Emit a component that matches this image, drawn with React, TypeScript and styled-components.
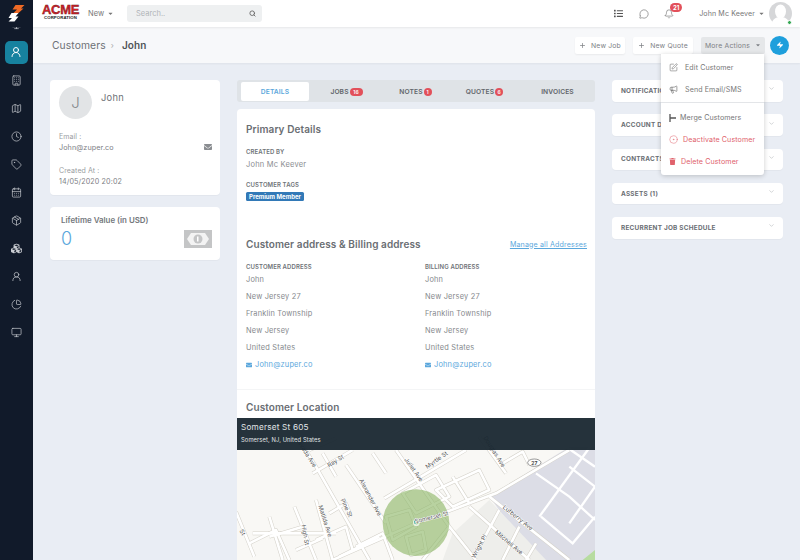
import React from "react";
import styled, { createGlobalStyle } from "styled-components";
import {
  Bell, Building, CalendarDays, ChevronDown, Clock, Map as MapIcon, Megaphone, MessageCircle,
  Monitor, Package, PieChart, Plus, Search, SquarePen, Tag, UserRound, Zap, CircleDot,
} from "lucide-react";
import { FaCaretDown, FaCubes, FaEnvelope, FaList, FaTrash } from "react-icons/fa";

const C = {
  side: "#111a2a", active: "#17829f", page: "#e9edf4", sub: "#f7f8fa", text: "#7b7f84", dark: "#63676c",
  blue: "#5ba7dc", red: "#e2505a", line: "#e3e5e8",
};
const FONT = `Inter, "Liberation Sans", sans-serif`;

const Global = createGlobalStyle`
  html, body { margin: 0; height: 100%; overflow: hidden; background: ${C.page}; }
  body { font-family: ${FONT}; color: ${C.text}; }
  * { box-sizing: border-box; }
`;

const Shell = styled.div`
  width: 800px; height: 560px; overflow: hidden;
  display: grid; grid-template-columns: 33px 1fr;
`;

/* sidebar */
const Side = styled.aside`background: ${C.side}; overflow: hidden;`;
const LogoCell = styled.div`
  position: relative; z-index: 1; height: 27px; background: ${C.side};
  display: flex; align-items: center; justify-content: center;
`;
const Nav = styled.nav`display: flex; flex-direction: column; align-items: center; margin-top: -17px; padding-right: 1px;`;
const NavItem = styled.div<{ $active?: boolean }>`
  width: 23px; height: 23px; margin: 2.5px 0; border-radius: 5px;
  display: flex; align-items: center; justify-content: center;
  background: ${(p) => (p.$active ? C.active : "transparent")};
  color: ${(p) => (p.$active ? "#fff" : "#c9ccd2")};
`;

/* top bar */
const Main = styled.div`display: flex; flex-direction: column; min-width: 0;`;
const Top = styled.header`
  height: 27px; background: #fff; display: flex; align-items: center; padding-left: 9px;
  box-shadow: 0 1px 2px rgba(0,0,0,.07); position: relative; z-index: 2;
`;
const Acme = styled.div`width: 37px; margin-top: -3px; display: flex; flex-direction: column; align-items: center;`;
const AcmeName = styled.span`
  font: 700 13px/12px "Liberation Sans", sans-serif; color: #d8232a; letter-spacing: -.3px;
  -webkit-text-stroke: .4px #6a1216;
`;
const AcmeSub = styled.span`font: 700 4.300px/4px "Liberation Sans", sans-serif; color: #222; letter-spacing: .1px;`;
const NewMenu = styled.div`
  margin-left: 9px; width: 32px; display: flex; align-items: center; gap: 3px; font-size: 7.5px; color: #777;
`;
const SearchBox = styled.div`
  margin-left: 7px; width: 135px; height: 17px; background: #eef0f1; border-radius: 3px;
  display: flex; align-items: center; justify-content: space-between; padding: 0 6px 0 9px;
  font-size: 7.5px; color: #b0b4b8;
`;
const TopRight = styled.div`
  margin-left: auto; display: flex; align-items: center; height: 100%; padding-right: 8px; color: #555;
`;
const TopIcon = styled.div<{ $w: number }>`
  position: relative; width: ${(p) => p.$w}px; display: flex; justify-content: center; align-items: center;
`;
const BellBadge = styled.span`
  position: absolute; left: 11px; top: -6px; height: 9px; min-width: 12px; border-radius: 5px; background: ${C.red};
  color: #fff; font-size: 6px; font-weight: 700; line-height: 9px; text-align: center;
`;
const UserName = styled.div`
  margin-left: 20px; display: flex; align-items: center; gap: 3px; font-size: 7.1px; color: #777; letter-spacing: .1px;
`;
const Avatar = styled.div`position: relative; width: 23px; height: 23px; margin-left: 4px;`;
const OnlineDot = styled.span`
  position: absolute; right: 0; bottom: 0; width: 5px; height: 5px; border-radius: 50%;
  background: #35a853; border: 1px solid #fff;
`;

/* breadcrumb row */
const Sub = styled.div`
  height: 36px; background: ${C.sub}; display: flex; align-items: center; padding: 0 11px 0 19px;
  position: relative; box-shadow: 0 1px 2px rgba(0,0,0,.05);
`;
const Crumb = styled.div`display: flex; align-items: center; font-size: 10.3px; color: #6d7176; letter-spacing: .1px;`;
const CrumbSep = styled.span`margin: 0 8px 0 5px; color: #aaa; font-size: 8px;`;
const CrumbNow = styled.b`color: #4f5357; font-weight: 600; font-size: 10px;`;
const Actions = styled.div`margin-left: auto; display: flex; align-items: center;`;
const ActionBtn = styled.button<{ $grey?: boolean; $w: number }>`
  all: unset; box-sizing: border-box; height: 17px; width: ${(p) => p.$w}px; margin-left: 8px; border-radius: 2px;
  display: flex; align-items: center; justify-content: center; gap: 5px; font-size: 6.8px; color: #7d8085; letter-spacing: .2px;
  background: ${(p) => (p.$grey ? "#e5e7e9" : "#fff")};
  box-shadow: ${(p) => (p.$grey ? "none" : "0 1px 2px rgba(0,0,0,.06)")};
`;
const Round = styled.div`
  width: 19px; height: 19px; margin-left: 5px; border-radius: 50%; background: #1e9fdc; color: #fff;
  display: flex; align-items: center; justify-content: center;
`;

/* dropdown lies over the page */
const Drop = styled.div`
  position: absolute; left: 628px; top: 27px; width: 103px; height: 121px; z-index: 5; background: #fff;
  border-radius: 0 0 3px 3px; box-shadow: 0 1px 5px rgba(0,0,0,.2); padding-top: 3px; color: #555;
`;
const DropItem = styled.div<{ $red?: boolean; $inset: number; $gap: number }>`
  height: 21.6px; display: flex; align-items: center; padding-left: ${(p) => p.$inset}px; gap: ${(p) => p.$gap}px;
  font-size: 7.1px; letter-spacing: .1px; color: ${(p) => (p.$red ? "#e0626c" : "#777")};
  svg { color: ${(p) => (p.$red ? "#e0626c" : "#555")}; }
`;
const DropLine = styled.div`height: 1px; background: ${C.line}; margin: 2px 0 4px;`;

/* page columns */
const Content = styled.main`
  flex: 1; min-height: 0; overflow: hidden; padding: 17px 17px 0;
  display: grid; grid-template-columns: 170px 358px 171px; column-gap: 17px; align-items: start;
`;
const Col = styled.div`display: flex; flex-direction: column;`;
const Card = styled.section`
  background: #fff; border-radius: 4px; box-shadow: 0 1px 1px rgba(0,0,0,.03);
`;
const ProfileCard = styled(Card)`height: 115px; padding: 6px 8px 0 9px;`;
const ProfileHead = styled.div`display: flex; gap: 9px;`;
const Initial = styled.div`
  width: 33px; height: 33px; border-radius: 50%; background: #e2e4e6; color: #85898e;
  display: flex; align-items: center; justify-content: center; font-size: 15px; font-weight: 300;
`;
const ProfileName = styled.div`font-size: 9.3px; line-height: 24px; color: #6f7378; letter-spacing: .3px;`;
const Small = styled.div`font-size: 7px; line-height: 11px; color: #9a9da1; letter-spacing: .1px;`;
const Value = styled.div`font-size: 7.2px; line-height: 11px; color: #7d8085; letter-spacing: .1px;`;
const EmailRow = styled.div`margin-top: 12px; display: flex; align-items: flex-end; justify-content: space-between;
  svg { margin-bottom: 2px; }`;
const CreatedBlock = styled.div`margin-top: 12px;`;
const LifeCard = styled(Card)`height: 53px; margin-top: 12px; padding: 8px 8px 0 11px;`;
const LifeTitle = styled.div`font-size: 7.9px; font-weight: 600; line-height: 11px; color: #73777c;`;
const LifeRow = styled.div`display: flex; justify-content: space-between; align-items: flex-start; margin-top: 2px;
  svg { margin-top: 2px; }`;
const LifeValue = styled.div`font-size: 18px; line-height: 22px; font-weight: 300; color: ${C.blue};`;

/* tabs */
const Tabs = styled.div`
  height: 22px; background: #dfe3e7; border-radius: 3px; padding: 2px 2px 2px 4px; display: grid;
  grid-template-columns: 68px 75px 63px 75px 1fr; align-items: center;
`;
const Tab = styled.div<{ $on?: boolean }>`
  height: 19px; display: flex; align-items: center; justify-content: center; gap: 1px; border-radius: 2px;
  font-size: 6.7px; font-weight: 600; letter-spacing: .1px;
  color: ${(p) => (p.$on ? C.blue : "#62666b")}; background: ${(p) => (p.$on ? "#fff" : "transparent")};
`;
const Count = styled.span<{ $wide?: boolean }>`
  height: 8px; min-width: ${(p) => (p.$wide ? 13 : 8)}px; border-radius: 4px; background: ${C.red}; color: #fff;
  font-size: 5px; line-height: 8px; text-align: center;
`;
const Details = styled(Card)`margin-top: 7px; height: 460px; overflow: hidden; padding-top: 13px;`;
const Block = styled.div`padding: 0 9px;`;
const H2 = styled.h2`margin: 0; font-size: 10px; line-height: 14px; font-weight: 600; color: #6a6e73; letter-spacing: .1px;`;
const Label = styled.div`font-size: 6px; line-height: 9px; font-weight: 600; color: #6f7378; letter-spacing: .1px;`;
const PrimaryBody = styled.div`margin-top: 11px;`;
const Person = styled.div`margin-top: 3px; font-size: 7.5px; line-height: 11px; color: #8a8d91; letter-spacing: .2px;`;
const TagsLabel = styled(Label)`margin-top: 10px;`;
const Pill = styled.span`
  display: inline-block; margin-top: 3px; height: 9px; padding: 0 3px; border-radius: 1.500px; background: #3279b7; color: #fff;
  font-size: 6px; font-weight: 700; line-height: 9px; vertical-align: top;
`;
const AddrHead = styled.div`margin-top: 28px; display: flex; align-items: center; justify-content: space-between;`;
const Manage = styled.a`font-size: 7.1px; color: ${C.blue}; text-decoration: underline; letter-spacing: .15px; margin-right: -1px;`;
const AddrGrid = styled.div`display: grid; grid-template-columns: 179px 1fr; margin-top: 11px;`;
const AddrLabel = styled(Label)`margin-bottom: 3px;`;
const AddrLine = styled.div`height: 17px; font-size: 7.4px; line-height: 12px; color: #85888c; letter-spacing: .2px;`;
const AddrMail = styled(AddrLine)`display: flex; gap: 3px; color: ${C.blue}; align-items: flex-start;
  svg { margin-top: 3px; }`;
const Rule = styled.div`height: 1px; background: #f4f5f6; margin-top: 13px;`;
const LocTitle = styled(H2)`margin-top: 10px;`;

/* map */
const MapWrap = styled.div`position: relative; margin-top: 4px; height: 142px; background: #f9f8f5;`;
const MapHead = styled.div`
  position: absolute; inset: 0 0 auto 0; height: 32px; background: rgba(25,39,48,.95); color: #e2e6e8; padding: 3px 4px;
`;
const MapTitle = styled.div`font-size: 8.200px; line-height: 13px; letter-spacing: .2px;`;
const MapSub = styled.div`font-size: 5.800px; line-height: 11px; letter-spacing: .1px;`;

/* accordions */
const Acc = styled(Card)`
  height: 21.500px; margin-bottom: 12.800px; padding: 0 8px 0 9px; display: flex; align-items: center; justify-content: space-between;
  font-size: 6.400px; font-weight: 700; letter-spacing: .25px; color: #6a6e73;
  svg { margin-top: -4px; color: #b5b8bb; }
`;

const ROADS = [
  "M290 450L540 340L780 250L1000 120",
  "M165 50L240 170L400 450",
  "M230 190L350 120",
  "M330 165L450 340",
  "M480 120L640 350L720 450",
  "M445 265L690 120",
  "M730 80L810 190",
  "M175 290L240 450",
  "M100 320L140 450",
  "M0 305L55 440",
  "M240 270L290 450",
  "M760 260L1000 450",
  "M700 290L880 450",
  "M640 350L560 450",
  "M50 370L300 370",
  "M100 380L200 350",
  "M600 240L730 180L760 240L650 290Z",
  "M500 250L600 195L640 260L540 310Z",
  "M450 320L520 300L540 350L470 390Z",
  "M510 380L560 365L570 420L525 435Z",
  "M310 440L430 380",
  "M220 120L300 85",
  "M410 130L450 190",
  "M800 160L860 125L880 165",
  "M240 390L330 350L350 420",
  "M790 300L720 430",
  "M850 350L800 450",
  "M900 400L870 450",
  "M280 310L330 280L345 320",
  "M40 400L120 360L160 450",
  "M180 420L260 385",
  "M360 410L440 370L470 450",
  "M260 130L300 200",
  "M650 200L700 280",
];
const GRID = [
  "M900 190L1000 260L1077 330",
  "M1000 170L1077 230",
  "M910 320L1077 90",
  "M1000 340L1077 230",
  "M990 110L1077 170",
  "M915 320L1010 400L1077 320",
];
const NAMES = [
  { t: "Ray St", x: 302, y: 158, r: -32 },
  { t: "Myrtle St", x: 605, y: 155, r: -35 },
  { t: "Juliet Ave", x: 528, y: 182, r: 55 },
  { t: "Douglas Ave", x: 770, y: 128, r: 58 },
  { t: "Nevada Ave", x: 205, y: 130, r: 58 },
  { t: "Alexander Ave", x: 398, y: 265, r: 62 },
  { t: "Pine St", x: 326, y: 296, r: 65 },
  { t: "Matilda Ave", x: 262, y: 335, r: 72 },
  { t: "High St", x: 202, y: 376, r: 80 },
  { t: "St", x: 14, y: 370, r: 60 },
  { t: "Somerset St", x: 588, y: 328, r: -14 },
  { t: "Lufberry Ave", x: 842, y: 328, r: 38 },
  { t: "Mitchell Ave", x: 815, y: 402, r: 40 },
  { t: "Wright Pl", x: 735, y: 412, r: -62 },
];

function StreetMap() {
  return (
    <svg width="358" height="142" viewBox="3 24 1074 426" style={{ display: "block" }}>
      <path d="M790 240L1000 110H1077V450H900L760 260Z" fill="#dcdde6" />
      <path d="M650 370L760 270L930 450H620Z" fill="#eeeeeb" />
      {GRID.map((d) => <path key={d} d={d} fill="none" stroke="#fff" strokeWidth="7" />)}
      {ROADS.map((d) => <path key={d} d={d} fill="none" stroke="#d3d0c8" strokeWidth="11" strokeLinejoin="round" />)}
      {ROADS.map((d) => <path key={d + "i"} d={d} fill="none" stroke="#fff" strokeWidth="8" strokeLinejoin="round" />)}
      <path d="M1040 450L1077 420V450Z" fill="#b7dca0" />
      <circle cx="540" cy="338" r="100" fill="#8db765" fillOpacity=".62" />
      <circle cx="541" cy="338" r="10" fill="#fff" fillOpacity=".7" />
      <circle cx="541" cy="336" r="7" fill="#3f9a58" />
      <ellipse cx="895" cy="158" rx="20" ry="11" fill="#fff" stroke="#666" strokeWidth="2" />
      <text x="895" y="164" textAnchor="middle" fontSize="15" fontWeight="700" fontFamily={FONT} fill="#444">27</text>
      {NAMES.map((n) => (
        <text key={n.t} x={n.x} y={n.y} textAnchor="middle" fontSize="18" fontFamily={FONT} fill="#555"
          stroke="#fff" strokeWidth="3" paintOrder="stroke" transform={`rotate(${n.r} ${n.x} ${n.y})`}>
          {n.t}
        </text>
      ))}
    </svg>
  );
}

function ZuperLogo() {
  return (
    <svg width="17" height="19" viewBox="7.500 3 17 19">
      <path d="M15 4H24L20.500 7.500H23L18 12H13L16.500 8.500H12Z" fill="#ef6a25" />
      <path d="M11 12H18L15 15.500H18L14 20.500H8L11.500 17H8Z" fill="#fff" />
    </svg>
  );
}

function AcmeLogo() {
  return (
    <Acme>
      <AcmeName>ACME</AcmeName>
      <AcmeSub>CORPORATION</AcmeSub>
    </Acme>
  );
}

function Silhouette() {
  return (
    <svg width="23" height="23" viewBox="0 0 23 23">
      <circle cx="11.500" cy="11.500" r="11.500" fill="#d6d7d9" />
      <ellipse cx="11.500" cy="9.500" rx="5.500" ry="7" fill="#fff" />
      <path d="M3 20c2-4 5-5 8.500-5s6.500 1 8.500 5a11.500 11.500 0 0 1-17 0Z" fill="#fff" />
    </svg>
  );
}

function Banknote() {
  return (
    <svg width="28" height="18" viewBox="0 0 28 18">
      <path d="M0 0H28V18H0Z" fill="#c4c5c6" />
      <path d="M3 9L7 3H21L25 9L21 15H7Z" fill="#f3f3f3" />
      <circle cx="14" cy="9" r="4.500" fill="#c4c5c6" />
      <path d="M13 6.500h1.500v5H13z" fill="#fff" />
    </svg>
  );
}

function MergeGlyph() {
  return (
    <svg width="7" height="8" viewBox="0 0 7 8">
      <path d="M1 0V8M1 4H7" stroke="#555" strokeWidth="1.300" fill="none" />
    </svg>
  );
}

const NAV = [Building, MapIcon, Clock, Tag, CalendarDays, Package, FaCubes, UserRound, PieChart, Monitor];
const ADDRESS = ["John", "New Jersey 27", "Franklin Township", "New Jersey", "United States"];
const PANELS = ["NOTIFICATIONS", "ACCOUNT DETAILS", "CONTRACTS", "ASSETS (1)", "RECURRENT JOB SCHEDULE"];

function Address({ title }: { title: string }) {
  return (
    <div>
      <AddrLabel>{title}</AddrLabel>
      {ADDRESS.map((l, i) => <AddrLine key={i}>{l}</AddrLine>)}
      <AddrMail><FaEnvelope size={6} />John@zuper.co</AddrMail>
    </div>
  );
}

export default function App() {
  return (
    <>
      <Global />
      <Shell>
        <Side>
          <LogoCell><ZuperLogo /></LogoCell>
          <Nav>
            <NavItem><Monitor size={11} strokeWidth={1.500} /></NavItem>
            <NavItem $active><UserRound size={12} strokeWidth={2} /></NavItem>
            {NAV.map((I, i) => <NavItem key={i}><I size={11} strokeWidth={1.500} /></NavItem>)}
          </Nav>
        </Side>
        <Main>
          <Top>
            <AcmeLogo />
            <NewMenu>New <FaCaretDown size={7} /></NewMenu>
            <SearchBox>Search.. <Search size={7} color="#666" strokeWidth={3} /></SearchBox>
            <TopRight>
              <TopIcon $w={20}><FaList size={9} /></TopIcon>
              <TopIcon $w={31}><MessageCircle size={10} strokeWidth={1.300} /></TopIcon>
              <TopIcon $w={20}>
                <Bell size={10} strokeWidth={1.300} />
                <BellBadge>21</BellBadge>
              </TopIcon>
              <UserName>John Mc Keever <FaCaretDown size={7} /></UserName>
              <Avatar><Silhouette /><OnlineDot /></Avatar>
            </TopRight>
          </Top>
          <Sub>
            <Crumb>Customers<CrumbSep>›</CrumbSep><CrumbNow>John</CrumbNow></Crumb>
            <Actions>
              <ActionBtn $w={50}><Plus size={7} strokeWidth={2.500} />New Job</ActionBtn>
              <ActionBtn $w={60}><Plus size={7} strokeWidth={2.500} />New Quote</ActionBtn>
              <ActionBtn $grey $w={64}>More Actions <FaCaretDown size={6} /></ActionBtn>
              <Round><Zap size={8} fill="#fff" strokeWidth={0} /></Round>
            </Actions>
            <Drop>
              <DropItem $inset={8} $gap={7}><SquarePen size={9} strokeWidth={1.300} />Edit Customer</DropItem>
              <DropItem $inset={8} $gap={7}><Megaphone size={9} strokeWidth={1.500} />Send Email/SMS</DropItem>
              <DropLine />
              <DropItem $inset={8} $gap={4}><MergeGlyph />Merge Customers</DropItem>
              <DropItem $inset={8} $gap={5} $red><CircleDot size={9} strokeWidth={1.300} />Deactivate Customer</DropItem>
              <DropItem $inset={8} $gap={5} $red><FaTrash size={7} />Delete Customer</DropItem>
            </Drop>
          </Sub>
          <Content>
            <Col>
              <ProfileCard>
                <ProfileHead>
                  <Initial>J</Initial>
                  <ProfileName>John</ProfileName>
                </ProfileHead>
                <EmailRow>
                  <div>
                    <Small>Email :</Small>
                    <Value>John@zuper.co</Value>
                  </div>
                  <FaEnvelope size={8} color="#8a8d91" />
                </EmailRow>
                <CreatedBlock>
                  <Small>Created At :</Small>
                  <Value>14/05/2020 20:02</Value>
                </CreatedBlock>
              </ProfileCard>
              <LifeCard>
                <LifeTitle>Lifetime Value (in USD)</LifeTitle>
                <LifeRow>
                  <LifeValue>0</LifeValue>
                  <Banknote />
                </LifeRow>
              </LifeCard>
            </Col>
            <Col>
              <Tabs>
                <Tab $on>DETAILS</Tab>
                <Tab>JOBS <Count $wide>16</Count></Tab>
                <Tab>NOTES <Count>1</Count></Tab>
                <Tab>QUOTES <Count>6</Count></Tab>
                <Tab>INVOICES</Tab>
              </Tabs>
              <Details>
                <Block>
                  <H2>Primary Details</H2>
                  <PrimaryBody>
                    <Label>CREATED BY</Label>
                    <Person>John Mc Keever</Person>
                    <TagsLabel>CUSTOMER TAGS</TagsLabel>
                    <Pill>Premium Member</Pill>
                  </PrimaryBody>
                  <AddrHead>
                    <H2>Customer address &amp; Billing address</H2>
                    <Manage>Manage all Addresses</Manage>
                  </AddrHead>
                  <AddrGrid>
                    <Address title="CUSTOMER ADDRESS" />
                    <Address title="BILLING ADDRESS" />
                  </AddrGrid>
                </Block>
                <Rule />
                <Block><LocTitle>Customer Location</LocTitle></Block>
                <MapWrap>
                  <StreetMap />
                  <MapHead>
                    <MapTitle>Somerset St 605</MapTitle>
                    <MapSub>Somerset, NJ, United States</MapSub>
                  </MapHead>
                </MapWrap>
              </Details>
            </Col>
            <Col>
              {PANELS.map((p) => (
                <Acc key={p}>{p}<ChevronDown size={7} /></Acc>
              ))}
            </Col>
          </Content>
        </Main>
      </Shell>
    </>
  );
}
